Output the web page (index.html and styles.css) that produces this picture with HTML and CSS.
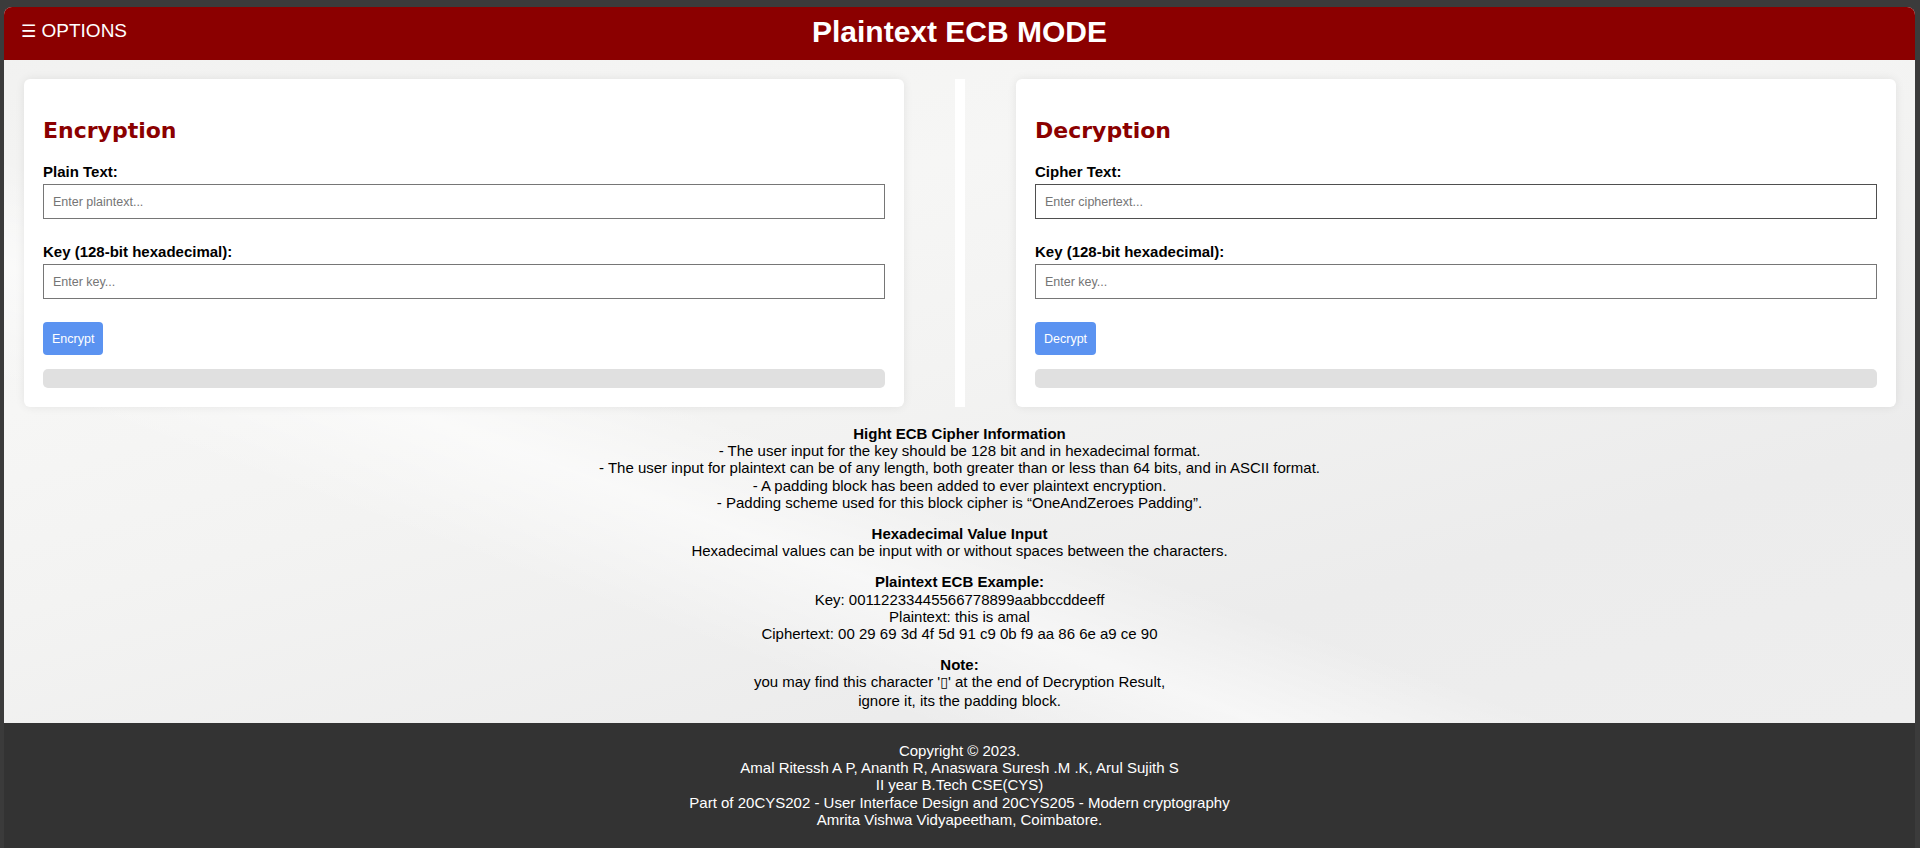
FILE: index.html
```html
<!DOCTYPE html>
<html lang="en">
<head>
<meta charset="utf-8">
<title>Plaintext ECB MODE</title>
<link rel="stylesheet" href="styles.css">
</head>
<body>
<div class="window">
  <div class="frame">
    <header class="topbar">
      <button class="menu-btn" type="button"><span class="menu-icon">☰</span> OPTIONS</button>
      <h1 class="page-title">Plaintext ECB MODE</h1>
      <div class="spacer"></div>
    </header>

    <main class="content">
      <section class="panels">
        <div class="card">
          <h2 class="card-title">Encryption</h2>
          <label class="field-label">Plain Text:</label>
          <input class="field-input" type="text" placeholder="Enter plaintext...">
          <label class="field-label gap-top">Key (128-bit hexadecimal):</label>
          <input class="field-input" type="text" placeholder="Enter key...">
          <button class="action-btn" type="button">Encrypt</button>
          <div class="result-bar"></div>
        </div>

        <div class="divider"></div>

        <div class="card">
          <h2 class="card-title">Decryption</h2>
          <label class="field-label">Cipher Text:</label>
          <input class="field-input field-input--active" type="text" placeholder="Enter ciphertext...">
          <label class="field-label gap-top">Key (128-bit hexadecimal):</label>
          <input class="field-input" type="text" placeholder="Enter key...">
          <button class="action-btn" type="button">Decrypt</button>
          <div class="result-bar"></div>
        </div>
      </section>

      <section class="info">
        <p class="info-block">
          <strong class="line">Hight ECB Cipher Information</strong>
          <span class="line">- The user input for the key should be 128 bit and in hexadecimal format.</span>
          <span class="line">- The user input for plaintext can be of any length, both greater than or less than 64 bits, and in ASCII format.</span>
          <span class="line">- A padding block has been added to ever plaintext encryption.</span>
          <span class="line">- Padding scheme used for this block cipher is “OneAndZeroes Padding”.</span>
        </p>
        <p class="info-block">
          <strong class="line">Hexadecimal Value Input</strong>
          <span class="line">Hexadecimal values can be input with or without spaces between the characters.</span>
        </p>
        <p class="info-block">
          <strong class="line">Plaintext ECB Example:</strong>
          <span class="line">Key: 00112233445566778899aabbccddeeff</span>
          <span class="line">Plaintext: this is amal</span>
          <span class="line">Ciphertext: 00 29 69 3d 4f 5d 91 c9 0b f9 aa 86 6e a9 ce 90</span>
        </p>
        <p class="info-block">
          <strong class="line">Note:</strong>
          <span class="line">you may find this character '<span class="box-char">▯</span>' at the end of Decryption Result,</span>
          <span class="line">ignore it, its the padding block.</span>
        </p>
      </section>
    </main>

    <footer class="footer">
      <span class="line">Copyright © 2023.</span>
      <span class="line">Amal Ritessh A P, Ananth R, Anaswara Suresh .M .K, Arul Sujith S</span>
      <span class="line">II year B.Tech CSE(CYS)</span>
      <span class="line">Part of 20CYS202 - User Interface Design and 20CYS205 - Modern cryptography</span>
      <span class="line">Amrita Vishwa Vidyapeetham, Coimbatore.</span>
    </footer>
  </div>
</div>
</body>
</html>
```

FILE: styles.css
```css
* {
  box-sizing: border-box;
}

html, body {
  margin: 0;
  padding: 0;
  height: 100%;
}

body {
  background: #3b3b3b;
  font-family: "Liberation Sans", Arial, sans-serif;
  color: #000;
  overflow: hidden;
}

.window {
  padding: 7px 5px 0 4px;
  height: 100%;
}

.frame {
  height: 100%;
  border-radius: 8px 8px 0 0;
  overflow: hidden;
  display: flex;
  flex-direction: column;
  background:
    linear-gradient(200deg, rgba(255,255,255,0) 55%, rgba(255,255,255,0.55) 62%, rgba(255,255,255,0) 70%),
    linear-gradient(165deg, #f1f1f0 0%, #f6f6f5 30%, #f3f3f2 45%, #ececec 70%, #efefef 100%);
}

/* Header */
.topbar {
  height: 53px;
  background: #8b0000;
  display: grid;
  grid-template-columns: 1fr auto 1fr;
  align-items: start;
  flex-shrink: 0;
}

.menu-btn {
  justify-self: start;
  background: none;
  border: none;
  color: #fff;
  font-family: "Liberation Sans", Arial, sans-serif;
  font-size: 19px;
  padding: 13px 0 0 17px;
  margin: 0;
  line-height: normal;
  cursor: pointer;
  text-align: left;
}

.menu-icon {
  font-family: "DejaVu Sans", sans-serif;
  font-size: 17px;
}

.page-title {
  margin: 0;
  padding-top: 8px;
  color: #fff;
  font-family: "Liberation Sans", Arial, sans-serif;
  font-weight: bold;
  font-size: 30px;
  line-height: normal;
}

/* Main */
.content {
  flex: 1;
  display: flex;
  flex-direction: column;
}

.panels {
  display: flex;
  align-items: stretch;
  gap: 51px;
  padding: 19px 19px 0 20px;
}

.card {
  flex: 1;
  background: #fff;
  border-radius: 6px;
  box-shadow: 0 0 10px rgba(0, 0, 0, 0.08);
  padding: 20px 19px 19px;
  display: flex;
  flex-direction: column;
  align-items: flex-start;
}

.divider {
  width: 10px;
  background: #fff;
  flex-shrink: 0;
}

.card-title {
  margin: 19px 0 20px;
  color: #8b0000;
  font-family: "DejaVu Sans", Verdana, sans-serif;
  font-weight: bold;
  font-size: 22px;
  line-height: normal;
}

.field-label {
  display: block;
  font-weight: bold;
  font-size: 15px;
  line-height: normal;
  margin-bottom: 4px;
}

.field-label.gap-top {
  margin-top: 24px;
}

.field-input {
  display: block;
  width: 100%;
  height: 35px;
  border: 1px solid #767676;
  padding: 0 9px;
  font-family: "Liberation Sans", Arial, sans-serif;
  font-size: 12.5px;
  color: #000;
  background: #fff;
  outline: none;
}

.field-input--active {
  border-color: #4f4f4f;
}

.field-input::placeholder {
  color: #757575;
}

.action-btn {
  margin-top: 23px;
  height: 33px;
  padding: 0 9px;
  background: #5b93f1;
  color: #fff;
  border: none;
  border-radius: 4px;
  font-family: "Liberation Sans", Arial, sans-serif;
  font-size: 12.5px;
  cursor: pointer;
}

.result-bar {
  margin-top: 14px;
  width: 100%;
  height: 19px;
  background: #e0e0e0;
  border-radius: 5px;
}

/* Info */
.info {
  text-align: center;
  font-size: 15px;
  line-height: 17.2px;
  padding: 18px 0 0;
}

.info-block {
  margin: 0 0 14px;
}

.info-block:last-child {
  margin-bottom: 0;
}

.line {
  display: block;
}

.box-char {
  font-family: "DejaVu Sans", sans-serif;
  font-size: 14px;
}

/* Footer */
.footer {
  flex-shrink: 0;
  background: #333;
  color: #fff;
  text-align: center;
  font-size: 15px;
  line-height: 17.2px;
  padding: 19px 0 20px;
  margin-top: auto;
}
```
